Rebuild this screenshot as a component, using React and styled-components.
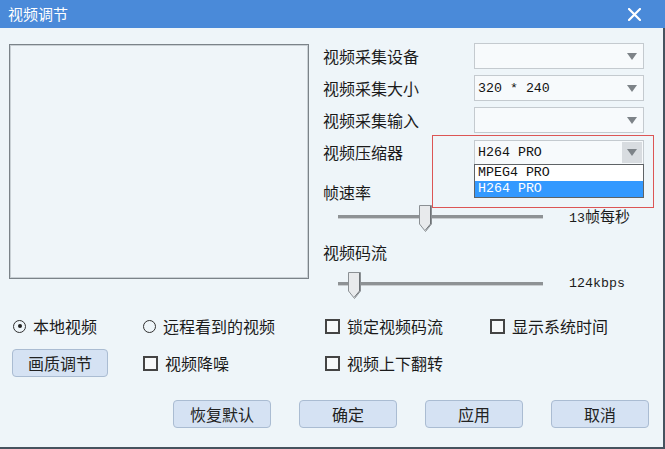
import React from 'react';
import styled, { createGlobalStyle } from 'styled-components';

const CJK = `"Noto Sans CJK SC", "Microsoft YaHei", sans-serif`;
const MONO = `"Liberation Mono", "Noto Sans CJK SC", monospace`;

const Global = createGlobalStyle`
  html, body { margin: 0; padding: 0; background: #eef5f9; }
  #root { width: 665px; height: 449px; }
  * { box-sizing: border-box; }
`;

const Window = styled.div`
  width: 665px;
  height: 449px;
  display: flex;
  flex-direction: column;
  font-family: ${CJK};
  color: #1b1b1b;
  overflow: hidden;
`;

const TitleBar = styled.div`
  height: 28px;
  flex: none;
  background: #4a8ad9;
  display: flex;
  align-items: center;
  justify-content: space-between;
  padding: 0 24px 0 8px;
  color: #fff;
`;

const Title = styled.span`
  font-size: 15px;
  line-height: 20px;
`;

const Body = styled.div`
  flex: 1;
  background: #eef5f9;
  border-right: 2px solid #46535f;
  border-bottom: 2px solid #46535f;
  padding: 12px 0 0 9px;
  display: flex;
  flex-direction: column;
`;

const Top = styled.div`
  display: flex;
  align-items: flex-start;
`;

const Preview = styled.div`
  width: 300px;
  height: 235px;
  margin-top: 4px;
  border: 1px solid #7b8389;
  box-shadow: inset 0 0 0 1px #c9d0d5;
  background: #eff5f9;
`;

const Form = styled.div`
  margin-left: 14px;
  width: 331px;
  display: flex;
  flex-direction: column;
`;

const FieldRow = styled.div`
  position: relative;
  height: 32px;
  display: flex;
  align-items: center;
`;

const Label = styled.span`
  width: 151px;
  flex: none;
  font-size: 16px;
  line-height: 24px;
  white-space: nowrap;
  margin-top: ${p => p.$mt || 0}px;
`;

const Combo = styled.div`
  position: relative;
  width: 170px;
  height: ${p => p.$h || 26}px;
  border: 1px solid #c4cacf;
  background: #f7fafc;
  display: flex;
  align-items: stretch;
`;

const ComboValue = styled.span`
  flex: 1;
  padding-left: 3px;
  display: flex;
  align-items: center;
  font-family: ${MONO};
  font-size: 13.3px;
  color: #111;
`;

const ArrowBox = styled.span`
  width: 20px;
  margin: 1px;
  display: flex;
  align-items: center;
  justify-content: center;
  background: ${p => (p.$active ? '#d8dce0' : 'transparent')};
`;

const DropList = styled.div`
  position: absolute;
  left: -1px;
  top: 100%;
  width: 170px;
  border: 1px solid #5f6366;
  background: #fff;
  z-index: 3;
`;

const DropItem = styled.div`
  height: 16px;
  padding-left: 3px;
  display: flex;
  align-items: center;
  font-family: ${MONO};
  font-size: 13.3px;
  background: ${p => (p.$selected ? '#3399ff' : '#fff')};
  color: ${p => (p.$selected ? '#fff' : '#111')};
`;

const Highlight = styled.div`
  position: absolute;
  left: 109px;
  top: -1px;
  width: 222px;
  height: 73px;
  border: 1px solid #dc5555;
  pointer-events: none;
  z-index: 2;
`;

const SliderRow = styled.div`
  height: 26px;
  display: flex;
  align-items: center;
  padding-left: 15px;
  margin-top: ${p => p.$mt || 0}px;
`;

const Track = styled.div`
  position: relative;
  width: 205px;
  height: 4px;
  background: #8e9295;
  border-bottom: 1px solid #c9cdd0;
`;

const Thumb = styled.svg`
  position: absolute;
  top: -10px;
  display: block;
`;

const SliderValue = styled.span`
  margin-left: 26px;
  font-family: ${MONO};
  font-size: 13.3px;
  line-height: 20px;
  white-space: nowrap;
`;

const CjkPart = styled.span`
  font-family: ${CJK};
  font-size: 15px;
`;

const Options = styled.div`
  display: grid;
  grid-template-columns: 134px 182px 165px auto;
  row-gap: 11px;
  margin-top: 17px;
  align-items: center;
`;

const Option = styled.label`
  display: flex;
  align-items: center;
  gap: 7px;
  padding-left: ${p => p.$pl || 0}px;
  font-size: 16px;
  line-height: 24px;
  white-space: nowrap;
`;

const Radio = styled.span`
  width: 13px;
  height: 13px;
  border: 1.5px solid #303030;
  border-radius: 50%;
  display: flex;
  align-items: center;
  justify-content: center;
  &::after {
    content: '';
    width: 4px;
    height: 4px;
    border-radius: 50%;
    background: ${p => (p.$checked ? '#222' : 'transparent')};
  }
`;

const Check = styled.span`
  width: 15px;
  height: 15px;
  border: 2px solid #444;
  background: #f7f9fa;
`;

const Button = styled.button`
  width: ${p => p.$w || 98}px;
  height: 28px;
  margin-left: ${p => p.$ml || 0}px;
  padding: 0;
  background: #d5e2f3;
  border: 1px solid #aabcd2;
  border-radius: 4px;
  font-family: ${CJK};
  font-size: 16px;
  color: #222;
`;

const ButtonRow = styled.div`
  display: flex;
  justify-content: flex-end;
  gap: 28px;
  margin-top: 23px;
  padding-right: 14px;
`;

const DownArrow = () => (
  <svg width="10" height="7" viewBox="0 0 10 7">
    <path d="M0 0 H10 L5 7 Z" fill="#7d8388" />
  </svg>
);

const Slider = ({ pos }) => (
  <Track>
    <Thumb width="13" height="27" viewBox="0 0 13 27" style={{ left: `${pos}px` }}>
      <path d="M0.5 0.5 H12.5 V19 L6.5 26.5 L0.5 19 Z" fill="#e8eaec" stroke="#8b9094" />
      <path d="M11.5 1 V19 L6.5 25" fill="none" stroke="#6d7276" />
    </Thumb>
  </Track>
);

const CloseIcon = () => (
  <svg width="13" height="13" viewBox="0 0 13 13">
    <path d="M1 1 L12 12 M12 1 L1 12" stroke="#fff" strokeWidth="2.2" strokeLinecap="round" />
  </svg>
);

export default function App() {
  return (
    <>
      <Global />
      <Window>
        <TitleBar>
          <Title>视频调节</Title>
          <CloseIcon />
        </TitleBar>
        <Body>
          <Top>
            <Preview />
            <Form>
              <FieldRow>
                <Label>视频采集设备</Label>
                <Combo>
                  <ComboValue />
                  <ArrowBox><DownArrow /></ArrowBox>
                </Combo>
              </FieldRow>
              <FieldRow>
                <Label>视频采集大小</Label>
                <Combo>
                  <ComboValue>320 * 240</ComboValue>
                  <ArrowBox><DownArrow /></ArrowBox>
                </Combo>
              </FieldRow>
              <FieldRow>
                <Label>视频采集输入</Label>
                <Combo>
                  <ComboValue />
                  <ArrowBox><DownArrow /></ArrowBox>
                </Combo>
              </FieldRow>
              <FieldRow>
                <Label>视频压缩器</Label>
                <Combo $h={25}>
                  <ComboValue>H264 PRO</ComboValue>
                  <ArrowBox $active><DownArrow /></ArrowBox>
                  <DropList>
                    <DropItem>MPEG4 PRO</DropItem>
                    <DropItem $selected>H264 PRO</DropItem>
                  </DropList>
                </Combo>
                <Highlight />
              </FieldRow>
              <Label $mt={12}>帧速率</Label>
              <SliderRow>
                <Slider pos={81} />
                <SliderValue>13<CjkPart>帧每秒</CjkPart></SliderValue>
              </SliderRow>
              <Label $mt={10}>视频码流</Label>
              <SliderRow $mt={7}>
                <Slider pos={10} />
                <SliderValue>124kbps</SliderValue>
              </SliderRow>
            </Form>
          </Top>
          <Options>
            <Option $pl={4}><Radio $checked />本地视频</Option>
            <Option><Radio />远程看到的视频</Option>
            <Option><Check />锁定视频码流</Option>
            <Option><Check />显示系统时间</Option>
            <div><Button $w={96} $ml={3}>画质调节</Button></div>
            <Option><Check />视频降噪</Option>
            <Option><Check />视频上下翻转</Option>
            <div />
          </Options>
          <ButtonRow>
            <Button>恢复默认</Button>
            <Button>确定</Button>
            <Button>应用</Button>
            <Button>取消</Button>
          </ButtonRow>
        </Body>
      </Window>
    </>
  );
}
